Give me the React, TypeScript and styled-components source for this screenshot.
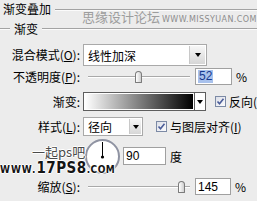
import styled, { createGlobalStyle } from 'styled-components';

const GlobalStyle = createGlobalStyle`
  html, body { margin: 0; padding: 0; background: #ececec; }
  body {
    font-family: "Noto Sans CJK SC", "Noto Sans", sans-serif;
    font-size: 12px;
    color: #000;
  }
`;

export default function App() {
  return (
    <>
      <GlobalStyle />
      <Panel>
        <Header>
          <Heading>渐变叠加</Heading>
          <Rule $top={9} />
        </Header>
        <Legend>
          <Rule $top={8} $w={10} />
          <LegendText>渐变</LegendText>
          <Rule $top={8} />
        </Legend>

        <Row $top={6} $h={22}>
          <Label>混合模式(<u>O</u>):</Label>
          <Select $w={124}>
            <SelectValue>线性加深</SelectValue>
            <DropButton $w={15}><Caret /></DropButton>
          </Select>
        </Row>

        <Row $top={2} $h={17}>
          <Label>不透明度(<u>P</u>):</Label>
          <Slider>
            <Groove />
            <Thumb style={{ left: 52 }} />
          </Slider>
          <NumberBox $w={37}><Selected>52</Selected></NumberBox>
          <Unit>%</Unit>
        </Row>

        <Row $top={7} $h={19}>
          <Label>渐变:</Label>
          <GradientPicker>
            <GradientSwatch />
            <GradientButton><Caret /></GradientButton>
          </GradientPicker>
          <CheckField $ml={9}>
            <CheckBox />
            <span>反向(R)</span>
          </CheckField>
        </Row>

        <Row $top={6} $h={19}>
          <Label>样式(<u>L</u>):</Label>
          <Select $w={60}>
            <SelectValue>径向</SelectValue>
            <DropButton $w={11}><Caret /></DropButton>
          </Select>
          <CheckField $ml={13}>
            <CheckBox />
            <span>与图层对齐(<u>I</u>)</span>
          </CheckField>
        </Row>

        <Row $top={2} $h={36}>
          <Label $hidden>角度(<u>N</u>):</Label>
          <Dial>
            <svg width="31" height="31" viewBox="0 0 31 31">
              <line x1="15.5" y1="1" x2="15.5" y2="16" stroke="#000" strokeWidth="1" />
              <circle cx="15.5" cy="16" r="1.6" fill="#000" />
            </svg>
          </Dial>
          <NumberBox $w={43} $h={18} $ml={3}>90</NumberBox>
          <Unit>度</Unit>
        </Row>

        <Row $top={4} $h={17}>
          <Label>缩放(<u>S</u>):</Label>
          <Slider>
            <Groove />
            <Thumb style={{ left: 95 }} />
          </Slider>
          <NumberBox $w={36}>145</NumberBox>
          <Unit>%</Unit>
        </Row>

        <SiteMark>
          <SiteName>思缘设计论坛</SiteName>
          <SiteUrl>WWW.MISSYUAN.COM</SiteUrl>
        </SiteMark>

        <Logo>
          <LogoTop>一起ps吧</LogoTop>
          <LogoUrl>
            <LogoPart $size={10} $ls={1}>WWW.</LogoPart>
            <LogoPart $size={15} $ls={0.5}>17PS8</LogoPart>
            <LogoPart $size={10} $ls={0.5}>.COM</LogoPart>
          </LogoUrl>
        </Logo>
      </Panel>
    </>
  );
}

const Panel = styled.div`
  position: relative;
  width: 257px;
  height: 201px;
  overflow: hidden;
  background: #ececec;
`;

const Header = styled.div`
  display: flex;
  align-items: flex-start;
  height: 20px;
  padding-left: 3px;
`;

const Heading = styled.span`
  line-height: 18px;
  white-space: nowrap;
  margin-right: 4px;
`;

const Rule = styled.div<{ $top: number; $w?: number }>`
  flex: ${p => (p.$w ? `0 0 ${p.$w}px` : '1')};
  margin-top: ${p => p.$top}px;
  border-top: 1px solid #a3a3a3;
  border-bottom: 1px solid #fbfbfb;
`;

const Legend = styled.div`
  display: flex;
  align-items: flex-start;
  height: 18px;
`;

const LegendText = styled.span`
  line-height: 18px;
  margin: 0 4px 0 4px;
  white-space: nowrap;
`;

const Row = styled.div<{ $top: number; $h: number }>`
  display: flex;
  align-items: center;
  margin-top: ${p => p.$top}px;
  height: ${p => p.$h}px;
  white-space: nowrap;
`;

const Label = styled.label<{ $hidden?: boolean }>`
  flex: 0 0 80px;
  margin-right: 3px;
  text-align: right;
  line-height: 14px;
  visibility: ${p => (p.$hidden ? 'hidden' : 'visible')};
`;

const Select = styled.div<{ $w: number }>`
  display: flex;
  flex: 0 0 ${p => p.$w}px;
  height: 100%;
  box-sizing: border-box;
  border: 1px solid #a9a9a9;
  background: #fff;
`;

const SelectValue = styled.span`
  flex: 1;
  display: flex;
  align-items: center;
  padding-left: 4px;
`;

const DropButton = styled.div<{ $w: number }>`
  flex: 0 0 ${p => p.$w}px;
  display: flex;
  align-items: center;
  justify-content: center;
  margin: 1px;
  border-left: 1px solid #c8c8c8;
  background: linear-gradient(#f7f7f7, #d6d6d6);
`;

const Caret = styled.div`
  width: 0;
  height: 0;
  border-left: 3px solid transparent;
  border-right: 3px solid transparent;
  border-top: 4px solid #000;
`;

const Slider = styled.div`
  position: relative;
  flex: 0 0 109px;
  height: 100%;
  margin-right: 3px;
`;

const Groove = styled.div`
  position: absolute;
  left: 5px;
  width: 102px;
  top: 8px;
  border-top: 1px solid #a9a9a9;
  border-bottom: 1px solid #fff;
`;

const Thumb = styled.div`
  position: absolute;
  top: 3px;
  width: 7px;
  height: 12px;
  box-sizing: border-box;
  border: 1px solid #7b7b7b;
  border-radius: 4px 4px 1px 1px;
  background: linear-gradient(90deg, #ffffff, #cfcfcf);
`;

const NumberBox = styled.div<{ $w: number; $h?: number; $ml?: number }>`
  flex: 0 0 ${p => p.$w}px;
  height: ${p => p.$h ?? 17}px;
  margin-left: ${p => p.$ml ?? 0}px;
  box-sizing: border-box;
  border: 1px solid #a0a0a0;
  background: #fff;
  padding-left: 2px;
  display: flex;
  align-items: center;
  font-family: "Liberation Sans", Arial, sans-serif;
  font-size: 12px;
`;

const Selected = styled.span`
  background: #a8c1ec;
  color: #16398f;
  padding: 0 1px;
  line-height: 13px;
`;

const Unit = styled.span`
  margin-left: 4px;
`;

const GradientPicker = styled.div`
  display: flex;
  flex: 0 0 123px;
  height: 100%;
  box-sizing: border-box;
  border: 1px solid #5e5e5e;
  background: #fff;
`;

const GradientSwatch = styled.div`
  flex: 1;
  margin: 1px;
  background: linear-gradient(90deg, #ffffff, #000000);
`;

const GradientButton = styled.div`
  flex: 0 0 10px;
  display: flex;
  align-items: center;
  justify-content: center;
  border-left: 1px solid #5e5e5e;
  background: #fff;
`;

const CheckField = styled.div<{ $ml: number }>`
  display: flex;
  flex-shrink: 0;
  align-items: center;
  gap: 3px;
  margin-left: ${p => p.$ml}px;
`;

const Box = styled.span`
  display: inline-flex;
  flex-shrink: 0;
  width: 11px;
  height: 11px;
  box-sizing: border-box;
  border: 1px solid #7c8aa5;
  background: linear-gradient(135deg, #dcdfe8, #fbfbfd);
`;

function CheckBox() {
  return (
    <Box>
      <svg width="9" height="9" viewBox="0 0 9 9">
        <polyline points="1.5,4.5 3.5,6.8 7.5,1.8" fill="none" stroke="#4a5c98" strokeWidth="1.6" />
      </svg>
    </Box>
  );
}

const Dial = styled.div`
  flex: 0 0 35px;
  height: 35px;
  margin-left: 2px;
  box-sizing: border-box;
  border: 2px solid #8f93a2;
  border-radius: 50%;
  background: #fff;
`;

const SiteMark = styled.div`
  position: absolute;
  left: 82px;
  top: 9px;
  display: flex;
  align-items: baseline;
  color: #9d9d9d;
  white-space: nowrap;
  pointer-events: none;
`;

const SiteName = styled.span`
  font-size: 13px;
  line-height: 15px;
`;

const SiteUrl = styled.span`
  margin-left: 2px;
  font-family: "DejaVu Sans", sans-serif;
  font-size: 8px;
  letter-spacing: 0.4px;
  color: #8d8d8d;
`;

const Logo = styled.div`
  position: absolute;
  left: 0;
  top: 144px;
  pointer-events: none;
  white-space: nowrap;
`;

const LogoTop = styled.div`
  margin-left: 32px;
  font-size: 13px;
  line-height: 16px;
  color: #4a4a4a;
  text-shadow: 1px 0 #fff, -1px 0 #fff, 0 1px #fff, 0 -1px #fff;
`;

const LogoUrl = styled.div`
  display: flex;
  align-items: baseline;
  margin-top: 1px;
  font-family: "DejaVu Sans Condensed", "DejaVu Sans", sans-serif;
  font-weight: bold;
  color: #151515;
  text-shadow: 1px 0 #fff, -1px 0 #fff, 0 1px #fff, 0 -1px #fff;
`;

const LogoPart = styled.span<{ $size: number; $ls: number }>`
  font-size: ${p => p.$size}px;
  letter-spacing: ${p => p.$ls}px;
  line-height: 1;
`;
